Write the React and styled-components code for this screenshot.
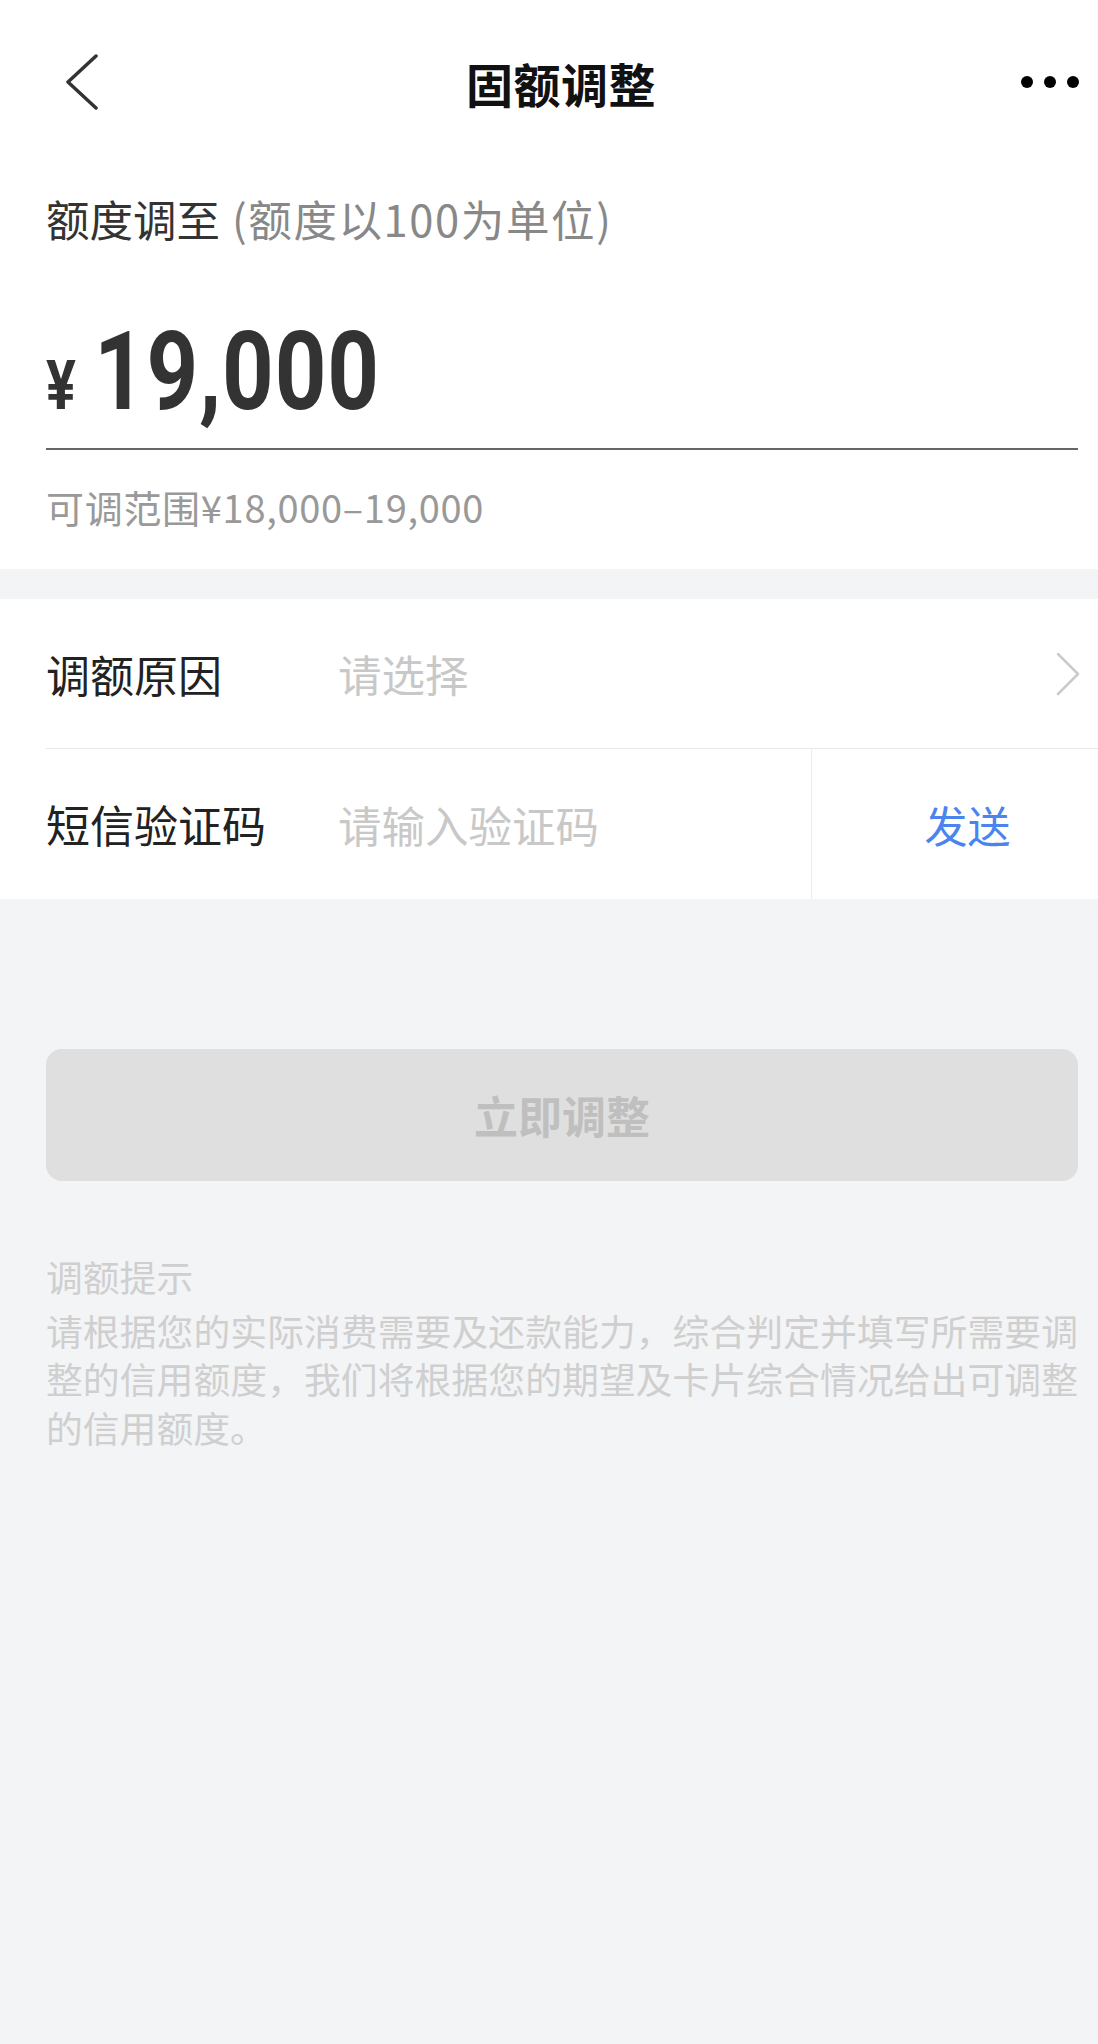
import React from 'react'
import styled, { createGlobalStyle } from 'styled-components'

const Global = createGlobalStyle`
  body {
    margin: 0;
    background: #f3f4f6;
    font-family: "Noto Sans CJK SC", "Noto Sans", sans-serif;
  }
`

const Page = styled.div`
  width: 1098px;
  min-height: 2044px;
  background: #f3f4f6;
`

const Top = styled.div`
  background: #fff;
  padding: 0 20px 37px 46px;
`

const Header = styled.div`
  height: 164px;
  display: grid;
  grid-template-columns: 1fr auto 1fr;
  align-items: center;
  margin-left: -46px;
  margin-right: -20px;
  padding: 0 19px 0 66px;

  .title {
    font-size: 47px;
    font-weight: 700;
    color: #111;
    letter-spacing: 0.5px;
    margin-right: 23px;
  }
  .dots {
    justify-self: end;
    display: flex;
    gap: 11px;
  }
  .dots span {
    width: 12px;
    height: 12px;
    border-radius: 50%;
    background: #000;
  }
`

const Label = styled.div`
  margin-top: 25px;
  font-size: 43.5px;
  line-height: 60px;
  color: #333;

  span {
    color: #888;
    margin-left: 12px;
    letter-spacing: 1.6px;
  }
`

const Amount = styled.div`
  margin-top: 68px;
  padding-bottom: 21px;
  border-bottom: 2px solid #666;
  color: #333;
  font-family: Roboto, "Liberation Sans", sans-serif;
  font-weight: 700;
  line-height: 1;

  .inner {
    display: inline-flex;
    align-items: baseline;
    transform: scaleX(0.82);
    transform-origin: left center;
  }
  .yen {
    font-size: 68px;
    margin-right: 22px;
  }
  .num {
    font-size: 110px;
    letter-spacing: 1px;
  }
`

const Range = styled.div`
  margin-top: 32px;
  font-size: 38px;
  line-height: 50px;
  color: #999;
  letter-spacing: 0.7px;
`

const Gap = styled.div`
  height: 30px;
`

const Rows = styled.div`
  background: #fff;
  padding-left: 46px;
`

const Row = styled.div`
  display: flex;
  align-items: center;
  height: ${p => p.h}px;
  border-bottom: ${p => (p.line ? '1px solid #e8e8e8' : 'none')};
`

const RowLabel = styled.div`
  width: 292px;
  font-size: 44px;
  color: #222;
`

const Placeholder = styled.div`
  flex: 1;
  font-size: 43.5px;
  color: #c8c8c8;
`

const Chevron = styled.svg`
  margin-right: 18px;
`

const Send = styled.div`
  width: 287px;
  align-self: stretch;
  border-left: 1px solid #ececec;
  display: flex;
  align-items: center;
  justify-content: center;
  padding-left: 25px;
  box-sizing: border-box;
  font-size: 43px;
  color: #4b84ee;
`

const Button = styled.div`
  margin: 150px 20px 0 46px;
  height: 132px;
  border-radius: 16px;
  background: #dfdfdf;
  display: flex;
  align-items: center;
  justify-content: center;
  font-size: 44px;
  font-weight: 700;
  color: #bfbfbf;
`

const Tips = styled.div`
  margin: 71px 20px 0 46px;
  font-size: 36.8px;
  line-height: 48.5px;
  color: #cfcfcf;
  text-align: justify;
`

const TipTitle = styled.div`
  height: 48.5px;
  margin-bottom: 5px;
`

export default function App() {
  return (
    <Page>
      <Global />
      <Top>
        <Header>
          <svg width="36" height="60" viewBox="0 0 36 60">
            <polyline points="30,4 2,30 30,56" fill="none" stroke="#333" strokeWidth="3.5" strokeLinecap="round" strokeLinejoin="round" />
          </svg>
          <div className="title">固额调整</div>
          <div className="dots">
            <span />
            <span />
            <span />
          </div>
        </Header>
        <Label>
          额度调至<span>(额度以100为单位)</span>
        </Label>
        <Amount>
          <span className="inner">
            <span className="yen">¥</span>
            <span className="num">19,000</span>
          </span>
        </Amount>
        <Range>可调范围¥18,000–19,000</Range>
      </Top>
      <Gap />
      <Rows>
        <Row h={149} line>
          <RowLabel>调额原因</RowLabel>
          <Placeholder>请选择</Placeholder>
          <Chevron width="24" height="44" viewBox="0 0 24 44">
            <polyline points="2,2 22,22 2,42" fill="none" stroke="#cbcbcb" strokeWidth="2.5" strokeLinecap="round" strokeLinejoin="round" />
          </Chevron>
        </Row>
        <Row h={150}>
          <RowLabel>短信验证码</RowLabel>
          <Placeholder>请输入验证码</Placeholder>
          <Send>发送</Send>
        </Row>
      </Rows>
      <Button>立即调整</Button>
      <Tips>
        <TipTitle>调额提示</TipTitle>
        <div>请根据您的实际消费需要及还款能力，综合判定并填写所需要调整的信用额度，我们将根据您的期望及卡片综合情况给出可调整的信用额度。</div>
      </Tips>
    </Page>
  )
}
